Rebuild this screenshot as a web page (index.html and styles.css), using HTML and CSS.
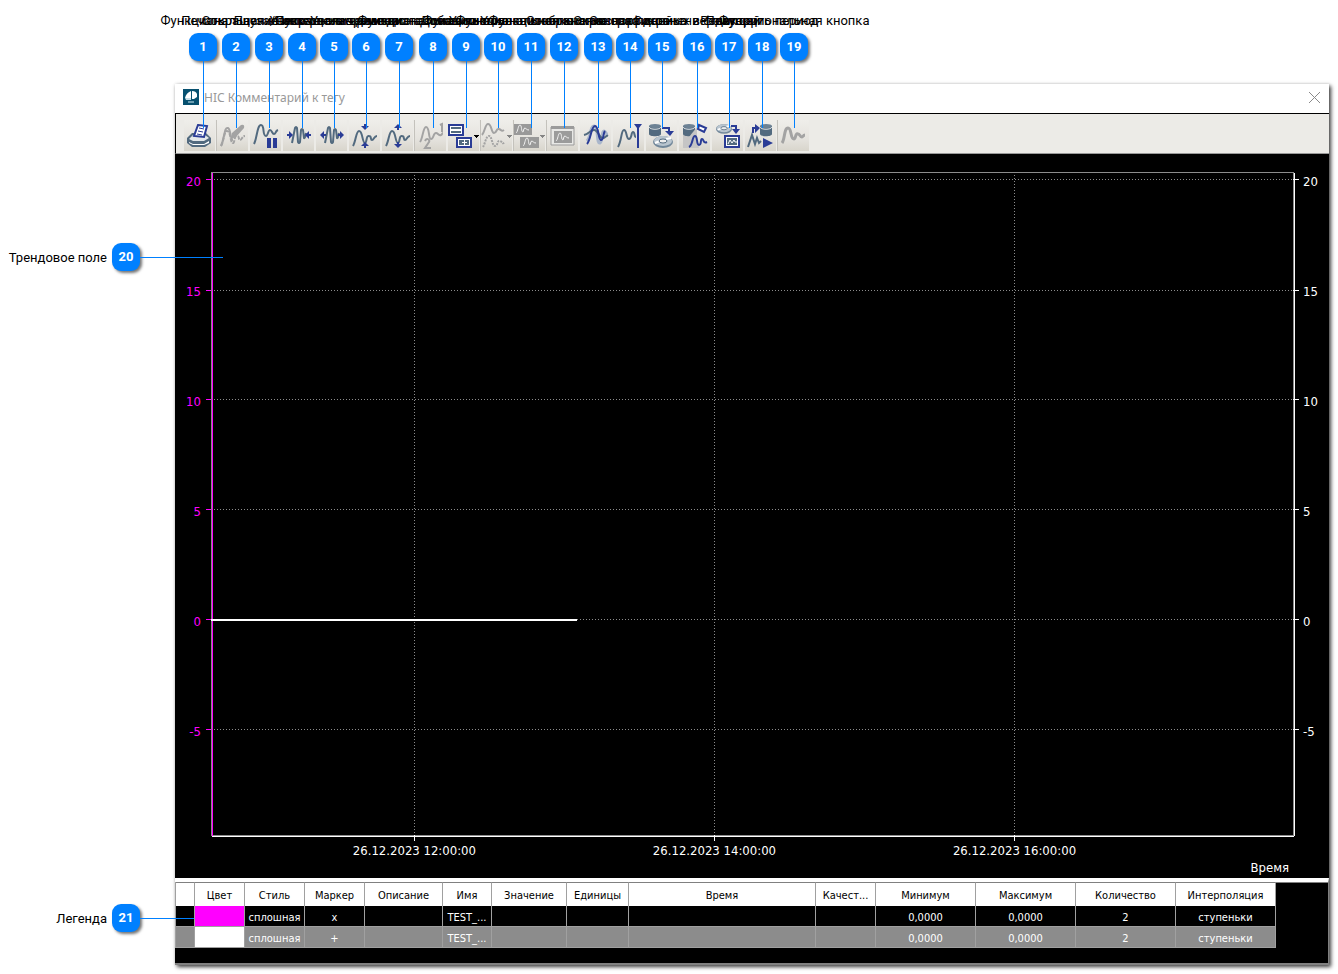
FILE: index.html
```html
<!DOCTYPE html>
<html lang="ru">
<head>
<meta charset="utf-8">
<title>HIC Комментарий к тегу</title>
<link rel="stylesheet" href="styles.css">
</head>
<body>
<svg class="defs" aria-hidden="true">
  <defs>
    <path id="wave" d="M4 26 C7 21 7 11 10 11 C14 11 13 23 16 23 C18 23 17 15 20 16 C23 16 21 20 23 20 C25 20 25 16 28 16"/>
    <path id="tall" d="M4 24 C7 19 7 5 11 5 C15 5 12 16 16 16 C18 16 18 10 20 10 C22 10 22 14 24 14 C26 14 25 11 28 10"/>
    <path id="pulse" d="M9 23 L12 8 Q13 6 14 8 L15 22 Q16 24 17 22 L18 10 Q19 8 20 10 L21 18 Q22 19 23 13"/>
    <path id="mini" d="M0 8 C2 7 2 0 4 0 C6 0 5 7 7 7 C8 7 7 3 9 3 C10 3 10 5 13 5"/>
    <g id="cyl"><path d="M0 2v8c0 3 12 3 12 0v-8z" fill="#526a7f"/><ellipse cx="6" cy="2" rx="6" ry="2" fill="#6d8294"/><path d="M0 3c1 3 11 3 12 0" fill="none" stroke="#dfe3e6"/></g>
    <g id="disc"><ellipse rx="10" ry="6" fill="#71879a"/><ellipse cy="-1" rx="9" ry="5" fill="#b9c5cf"/><path d="M-8 1l5-2M3-3l5-1" stroke="#fff" stroke-width="2"/><ellipse cy="-1" rx="4" ry="2" fill="#eee" stroke="#526a7f"/></g>
    <path id="caret" d="M0 0h5v1h-1v1h-1v1h-1v-1h-1v-1h-1z"/>
  </defs>
</svg>

<main class="page">
  <section class="window">
    <header class="titlebar">
      <svg class="logo" viewBox="0 0 16 16" aria-hidden="true"><path d="M0 0h16v16H0z" fill="#07506f"/><path d="M2 9Q3 4 8 2v7z" fill="#fff"/><path d="M9 2q4 0 5 3v3l-3 2H9z" fill="#fff"/><path d="M2 9h6v2H3z" fill="#c4dbe4"/><path d="M5 13h6" stroke="#6c9eb2" stroke-width="2"/></svg>
      <h1 class="title">HIC Комментарий к тегу</h1>
      <button class="close" aria-label="Закрыть"><svg viewBox="0 0 11 11"><path d="M0 0l11 11M11 0L0 11" stroke="#8a8a8a" fill="none"/></svg></button>
    </header>

    <div class="toolbar" role="toolbar">
      <button class="tool" aria-label="Печать"><svg viewBox="0 0 31 31"><path d="M3 18l5-5h14l5 5v5l-6 4H8l-5-4z" fill="#526a7f"/><path d="M5 19l4-4h12l4 3-5 3H9z" fill="#e4e8eb"/><path d="M5 22l4 2h11l5-3v2l-5 2H9l-4-2z" fill="#fff"/><path d="M14 5l9 1-3 11-10-1z" fill="#fff" stroke="#2a3c96" stroke-width="2"/><path d="M15 8l5 1M14 11l5 1M13 14l5 1" stroke="#2a3c96" stroke-width="1"/></svg></button>
      <button class="tool off" aria-label="Правка"><svg viewBox="0 0 31 31"><use href="#wave" class="g" stroke-dasharray="4 1"/><path d="M4 26C8 17 7 7 11 8c3 1 2 12 5 12" class="g"/><path d="M14 19l1-6 9-8q4-1 3 3l-8 9z" fill="#a3a3a3"/></svg></button>
      <button class="tool" aria-label="Пауза"><svg viewBox="0 0 31 31"><use href="#tall" class="s"/><path d="M17 18h4v10h-4zM23 18h4v10h-4z" class="bf"/></svg></button>
      <button class="tool" aria-label="Сокращение времени"><svg viewBox="0 0 31 31"><use href="#pulse" class="s"/><path d="M4 14h2v-3l4 4-4 4v-3H4zM28 14h-2v-3l-4 4 4 4v-3h2z" class="bf"/></svg></button>
      <button class="tool" aria-label="Увеличение времени"><svg viewBox="0 0 31 31"><use href="#pulse" class="s"/><path d="M10 14H8v-3l-4 4 4 4v-3h2zM22 14h2v-3l4 4-4 4v-3h-2z" class="bf"/></svg></button>
      <button class="tool" aria-label="Сжать диапазон"><svg viewBox="0 0 31 31"><use href="#wave" class="s"/><path d="M15 4h2v2h3l-4 4-4-4h3zM15 28h2v-2h3l-4-4-4 4h3z" class="bf"/></svg></button>
      <button class="tool" aria-label="Увеличить диапазон"><svg viewBox="0 0 31 31"><use href="#wave" class="s"/><path d="M15 10h2V8h3l-4-4-4 4h3zM15 22h2v2h3l-4 4-4-4h3z" class="bf"/></svg></button>
      <button class="tool off" aria-label="Порядок"><svg viewBox="0 0 31 31"><path d="M5 22C8 18 8 7 11 7c4 0 2 12 5 12s2-6 5-6c2 0 3 3 5 2 1 0 1-2 2-2" class="g"/><path d="M25 5l2-1v8M10 21c2-4 5-1 4 1l-4 6h6" class="g"/></svg></button>
      <button class="tool" aria-label="Добавить поле"><svg viewBox="0 0 31 31"><path d="M1 5h14v10H1z" fill="#fff" class="b"/><path d="M3 7h10v2H3zM3 11h10v2H3z" fill="#526a7f"/><path d="M9 18h14v9H9z" fill="#fff" class="b"/><path d="M11 20h10v5H11z" fill="#526a7f"/><path d="M14 22h5v1h-5zM16 20h1v5h-1z" fill="#fff"/><use href="#caret" x="26" y="15"/></svg></button>
      <button class="tool off" aria-label="Стиль линии"><svg viewBox="0 0 31 31"><path d="M1 15C4 12 4 4 7 4c4 0 3 9 6 9s2-5 5-4 2 3 5 1" class="g"/><path d="M2 27c2-3 3-11 6-11s3 10 6 10 2-6 5-5 2 4 5 1" class="g" stroke-dasharray="2 1"/><use href="#caret" x="26" y="15" fill="#858585"/></svg></button>
      <button class="tool off" aria-label="Поля тренда"><svg viewBox="0 0 31 31"><path d="M0 4h18v11H0zM6 17h19v11H6z" fill="#999"/><use href="#mini" x="2" y="5" class="w"/><use href="#mini" x="9" y="18" class="w"/><use href="#caret" x="26" y="15" fill="#858585"/></svg></button>
      <button class="tool off" aria-label="Окно тренда"><svg viewBox="0 0 31 31"><path d="M4 7h23v18H4z" fill="#e8e8e6" stroke="#9b9b9b"/><path d="M4 6h23v3H4zM7 11h18v12H7z" fill="#9b9b9b"/><use href="#mini" x="9" y="13" class="w"/></svg></button>
      <button class="tool" aria-label="Наложение трендов"><svg viewBox="0 0 31 31"><path d="M7 21c4-4 3-15 7-15 5 1 2 18 6 17 3-1 1-12 4-12 2 0 2 4 4 4" stroke="#a9b6cb" stroke-width="3" fill="none"/><path d="M4 15c5-1 6-5 10-5s5 7 8 8 4-3 6-2" class="s"/><path d="M7 24c4-4 4-18 8-18s3 14 6 14 2-7 4-9" class="b" fill="none"/></svg></button>
      <button class="tool" aria-label="Линейка"><svg viewBox="0 0 31 31"><path d="M5 27C9 20 8 10 11 10s2 9 5 9 2-7 4-7 1 5 3 5" class="s"/><path d="M21 4h8l-3 4v20h-2V8z" class="bf"/></svg></button>
      <button class="tool" aria-label="Сохранить архив"><svg viewBox="0 0 31 31"><use href="#cyl" x="3" y="4"/><path d="M16 8h7v4" class="b" fill="none"/><path d="M19 11h9l-4 5z" class="bf"/><use href="#disc" x="17" y="22"/></svg></button>
      <button class="tool" aria-label="Очистить архив"><svg viewBox="0 0 31 31"><path d="M4 28V15h8l6-5v7l2 11z" fill="#c5c5c5"/><use href="#cyl" x="4" y="4"/><path d="M10 17l8-10v10z" fill="#c5c5c5"/><path d="M20 5l7 3-2 4-6-3z" fill="#fff" class="b"/><path d="M10 27c4-2 3-11 6-11s1 9 4 9 1-6 3-6 1 5 5 3" class="b" fill="none"/></svg></button>
      <button class="tool" aria-label="Загрузить тренд"><svg viewBox="0 0 31 31"><use href="#disc" transform="translate(12 9) scale(.8)"/><path d="M19 6h5v4" class="b" fill="none"/><path d="M20 9h8l-4 5z" class="bf"/><path d="M13 16h14v11H13z" fill="#fff" class="b"/><path d="M15 18h10v7H15z" fill="#526a7f"/><path d="M16 24l2-4 2 3 2-3 1 2h2" fill="none" stroke="#fff"/></svg></button>
      <button class="tool" aria-label="Воспроизвести"><svg viewBox="0 0 31 31"><path d="M3 27L7 15l3 9 2-6 2 5 2-2" class="s"/><use href="#cyl" x="15" y="4"/><path d="M8 13V8h3" class="b" fill="none"/><path d="M10 4l5 4-5 5zM18 18l10 5-10 5z" class="bf"/></svg></button>
      <button class="tool off" aria-label="Функциональная кнопка"><svg viewBox="0 0 31 31"><path d="M4 23C7 19 6 8 10 8c4 0 2 11 6 11 2 0 1-6 4-5 2 0 2 3 4 3 1 0 1-2 3-2" class="g thick"/></svg></button>
    </div>

    <div class="chart">
      <svg class="plot" role="img" aria-label="Трендовое поле">
        <g class="grid">
          <line x1="0" x2="100%" y1="1.2%" y2="1.2%"/>
          <line x1="0" x2="100%" y1="17.8%" y2="17.8%"/>
          <line x1="0" x2="100%" y1="34.35%" y2="34.35%"/>
          <line x1="0" x2="100%" y1="50.95%" y2="50.95%"/>
          <line x1="0" x2="100%" y1="67.5%" y2="67.5%"/>
          <line x1="0" x2="100%" y1="84.1%" y2="84.1%"/>
          <line x1="18.8%" x2="18.8%" y1="0" y2="100%"/>
          <line x1="46.53%" x2="46.53%" y1="0" y2="100%"/>
          <line x1="74.26%" x2="74.26%" y1="0" y2="100%"/>
        </g>
        <rect class="frame" width="100%" height="100%"/>
        <svg class="edges" x="1" y="1" width="100%" height="100%">
          <line class="edge" x1="0" x2="100%" y1="100%" y2="100%"/>
          <line class="edge" x1="100%" x2="100%" y1="0" y2="100%"/>
          <line class="edge pink" x1="0" x2="0" y1="0" y2="100%"/>
        </svg>
        <line class="data" x1="0" x2="33.83%" y1="67.6%" y2="67.6%"/>
        <g class="left">
          <line x1="-5" x2="0" y1="1.2%" y2="1.2%"/><text x="-10" y="1.2%" dy="6">20</text>
          <line x1="-5" x2="0" y1="17.8%" y2="17.8%"/><text x="-10" y="17.8%" dy="6">15</text>
          <line x1="-5" x2="0" y1="34.35%" y2="34.35%"/><text x="-10" y="34.35%" dy="6">10</text>
          <line x1="-5" x2="0" y1="50.95%" y2="50.95%"/><text x="-10" y="50.95%" dy="6">5</text>
          <line x1="-5" x2="0" y1="67.5%" y2="67.5%"/><text x="-10" y="67.5%" dy="6">0</text>
          <line x1="-5" x2="0" y1="84.1%" y2="84.1%"/><text x="-10" y="84.1%" dy="6">-5</text>
        </g>
        <svg class="right" x="100%" width="36" height="100%">
          <line x1="0" x2="6" y1="1.2%" y2="1.2%"/><text x="10" y="1.2%" dy="6">20</text>
          <line x1="0" x2="6" y1="17.8%" y2="17.8%"/><text x="10" y="17.8%" dy="6">15</text>
          <line x1="0" x2="6" y1="34.35%" y2="34.35%"/><text x="10" y="34.35%" dy="6">10</text>
          <line x1="0" x2="6" y1="50.95%" y2="50.95%"/><text x="10" y="50.95%" dy="6">5</text>
          <line x1="0" x2="6" y1="67.5%" y2="67.5%"/><text x="10" y="67.5%" dy="6">0</text>
          <line x1="0" x2="6" y1="84.1%" y2="84.1%"/><text x="10" y="84.1%" dy="6">-5</text>
        </svg>
        <svg class="times" y="100%" width="100%" height="40">
          <line x1="18.8%" x2="18.8%" y1="0" y2="6"/><text x="18.8%" y="20">26.12.2023 12:00:00</text>
          <line x1="46.53%" x2="46.53%" y1="0" y2="6"/><text x="46.53%" y="20">26.12.2023 14:00:00</text>
          <line x1="74.26%" x2="74.26%" y1="0" y2="6"/><text x="74.26%" y="20">26.12.2023 16:00:00</text>
          <text class="axis-name" x="100%" dx="-4" y="37">Время</text>
        </svg>
      </svg>
    </div>

    <div class="legend">
      <table>
        <colgroup><col class="c20"><col class="c50"><col class="c60"><col class="c60"><col class="c78"><col class="c49"><col class="c75"><col class="c62"><col class="c187"><col class="c60"><col class="c100"><col class="c100"><col class="c100"><col class="c100"></colgroup>
        <thead><tr><th></th><th>Цвет</th><th>Стиль</th><th>Маркер</th><th>Описание</th><th>Имя</th><th>Значение</th><th>Единицы</th><th>Время</th><th>Качест...</th><th>Минимум</th><th>Максимум</th><th>Количество</th><th>Интерполяция</th></tr></thead>
        <tbody>
          <tr><td></td><td class="magenta"></td><td>сплошная</td><td>x</td><td></td><td>TEST_...</td><td></td><td></td><td></td><td></td><td>0,0000</td><td>0,0000</td><td>2</td><td>ступеньки</td></tr>
          <tr class="alt"><td></td><td class="white"></td><td>сплошная</td><td>+</td><td></td><td>TEST_...</td><td></td><td></td><td></td><td></td><td>0,0000</td><td>0,0000</td><td>2</td><td>ступеньки</td></tr>
        </tbody>
      </table>
    </div>
  </section>

  <div class="pin" style="left:203px"><span>Печать</span><b>1</b></div>
  <div class="pin" style="left:236px"><span>Функциональная кнопка</span><b>2</b></div>
  <div class="pin" style="left:269px"><span>Пауза/Пуск</span><b>3</b></div>
  <div class="pin" style="left:302px"><span>Сокращение интервала времени</span><b>4</b></div>
  <div class="pin" style="left:334px"><span>Увеличение времени</span><b>5</b></div>
  <div class="pin" style="left:366px"><span>Сокращение диапазона оси Y</span><b>6</b></div>
  <div class="pin" style="left:399px"><span>Увеличение диапазона оси Y</span><b>7</b></div>
  <div class="pin" style="left:433px"><span>Функциональная кнопка</span><b>8</b></div>
  <div class="pin" style="left:466px"><span>Добавить поле</span><b>9</b></div>
  <div class="pin" style="left:498px"><span>Функциональная кнопка</span><b>10</b></div>
  <div class="pin" style="left:531px"><span>Функциональная кнопка</span><b>11</b></div>
  <div class="pin" style="left:564px"><span>Функциональная кнопка</span><b>12</b></div>
  <div class="pin" style="left:598px"><span>Отображение графиков</span><b>13</b></div>
  <div class="pin" style="left:630px"><span>Экранная линейка</span><b>14</b></div>
  <div class="pin" style="left:662px"><span>Экспорт данных в файл</span><b>15</b></div>
  <div class="pin" style="left:697px"><span>Сохранение текущей</span><b>16</b></div>
  <div class="pin" style="left:729px"><span>Редактор</span><b>17</b></div>
  <div class="pin" style="left:762px"><span>Повторить период</span><b>18</b></div>
  <div class="pin" style="left:794px"><span>Функциональная кнопка</span><b>19</b></div>
  <div class="side field"><span>Трендовое поле</span><b>20</b><i></i></div>
  <div class="side key"><span>Легенда</span><b>21</b><i></i></div>
</main>
</body>
</html>
```
FILE: styles.css
```css
* { box-sizing: border-box; }
body { margin: 0; background: #fff; font-family: "DejaVu Sans Condensed", "DejaVu Sans", sans-serif; font-size: 13px; color: #000; }
.defs { position: absolute; width: 0; height: 0; }
.page { position: relative; display: flex; min-height: 100vh; padding: 84px 9px 9px 175px; }
.window { flex: 1; min-width: 0; display: flex; flex-direction: column; background: #000; box-shadow: 2px 2px 4px rgba(0,0,0,.75), 0 0 3px rgba(0,0,0,.12); }

.titlebar { display: flex; align-items: center; gap: 5px; height: 29px; padding: 0 9px 3px 8px; background: #fff; }
.logo { width: 16px; height: 16px; }
.title { flex: 1; margin: 0; font: 400 12px "Noto Sans", sans-serif; color: #999; }
.close { width: 11px; height: 11px; padding: 0; border: 0; background: none; display: flex; }
.close svg { width: 11px; height: 11px; }

.toolbar { display: flex; gap: 2px; height: 41px; padding: 6px 8px 2px; background: #ecebe7; border-top: 1px solid #000; border-left: 1px solid #000; border-bottom: 1px solid #999; }
.tool { width: 31px; height: 31px; padding: 0; border: 0; background: linear-gradient(#efeeea, #e5e3de 60%, #d8d5cc); display: block; }
.tool svg { display: block; width: 31px; height: 31px; }
.off { box-shadow: -1px 0 0 #c4c2bc; }
.s { fill: none; stroke: #526a7f; stroke-width: 2; }
.g { fill: none; stroke: #a3a3a3; stroke-width: 2; }
.g.thick { stroke-width: 3; }
.b { stroke: #2a3c96; stroke-width: 2; }
.bf { fill: #2a3c96; }
.w { fill: none; stroke: #f2f2f2; stroke-width: 1; }

.chart { flex: 1; display: flex; padding: 18px 36px 43px; min-height: 360px; }
.plot { flex: 1; min-width: 0; overflow: visible; font-size: 13px; }
.plot svg { overflow: visible; }
.plot line, .frame { shape-rendering: crispEdges; }
.grid line { stroke: #8c8c8c; stroke-dasharray: 1 2; }
.frame { fill: none; stroke: #8c8c8c; stroke-width: 1; }
.edge { stroke: #fff; }
.edge.pink { stroke: #f0f; }
.data { stroke: #fff; stroke-width: 2; }
.left line { stroke: #f0f; }
.left text { fill: #f0f; text-anchor: end; }
.right line, .times line { stroke: #fff; }
.right text, .times text { fill: #fff; }
.times text { text-anchor: middle; }
.times .axis-name { text-anchor: end; }

.legend { padding-bottom: 15px; border-top: 4px solid #fff; border-right: 1px solid #808080; border-bottom: 2px solid #808080; overflow: hidden; box-shadow: inset 0 1px 0 #808080; }
table { table-layout: fixed; width: 1101px; border-spacing: 0; border-left: 1px solid #a0a0a0; font-size: 11px; line-height: 15px; }
th, td { padding: 1px 0 0; border-right: 1px solid #a0a0a0; text-align: center; white-space: nowrap; overflow: hidden; font-weight: 400; }
th { height: 24px; padding-top: 2px; background: #fff; border-top: 1px solid #808080; }
td { height: 21px; padding-top: 2px; color: #fff; background: #000; border-bottom: 1px solid #a0a0a0; }
.alt td { background: #8c8c8c; }
td.magenta { background: #f0f; }
.alt td.white { background: #fff; }
.c20 { width: 19px; } .c49 { width: 49px; } .c50 { width: 50px; } .c60 { width: 60px; } .c62 { width: 62px; }
.c75 { width: 75px; } .c78 { width: 78px; } .c100 { width: 100px; } .c187 { width: 187px; }

.pin, .side { position: absolute; display: flex; align-items: center; font-family: Roboto, "Liberation Sans", sans-serif; font-size: 13px; white-space: nowrap; pointer-events: none; }
.pin { top: 13px; width: 0; flex-direction: column; }
.pin span { height: 20px; line-height: 15px; }
.pin::after { content: ""; flex: none; width: 1px; height: 67px; background: #0080ff; }
.pin b, .side b { flex: none; width: 28px; height: 28px; border-radius: 9px; background: #0080ff; color: #fff; line-height: 28px; text-align: center; box-shadow: 2px 2px 3px rgba(0,0,0,.55); }
.side { left: 0; }
.side span { width: 107px; margin-right: 5px; text-align: right; }
.side i { height: 1px; background: #0080ff; }
.field { top: 243px; }
.field i { width: 83px; }
.key { bottom: 42px; }
.key i { width: 54px; }
```
